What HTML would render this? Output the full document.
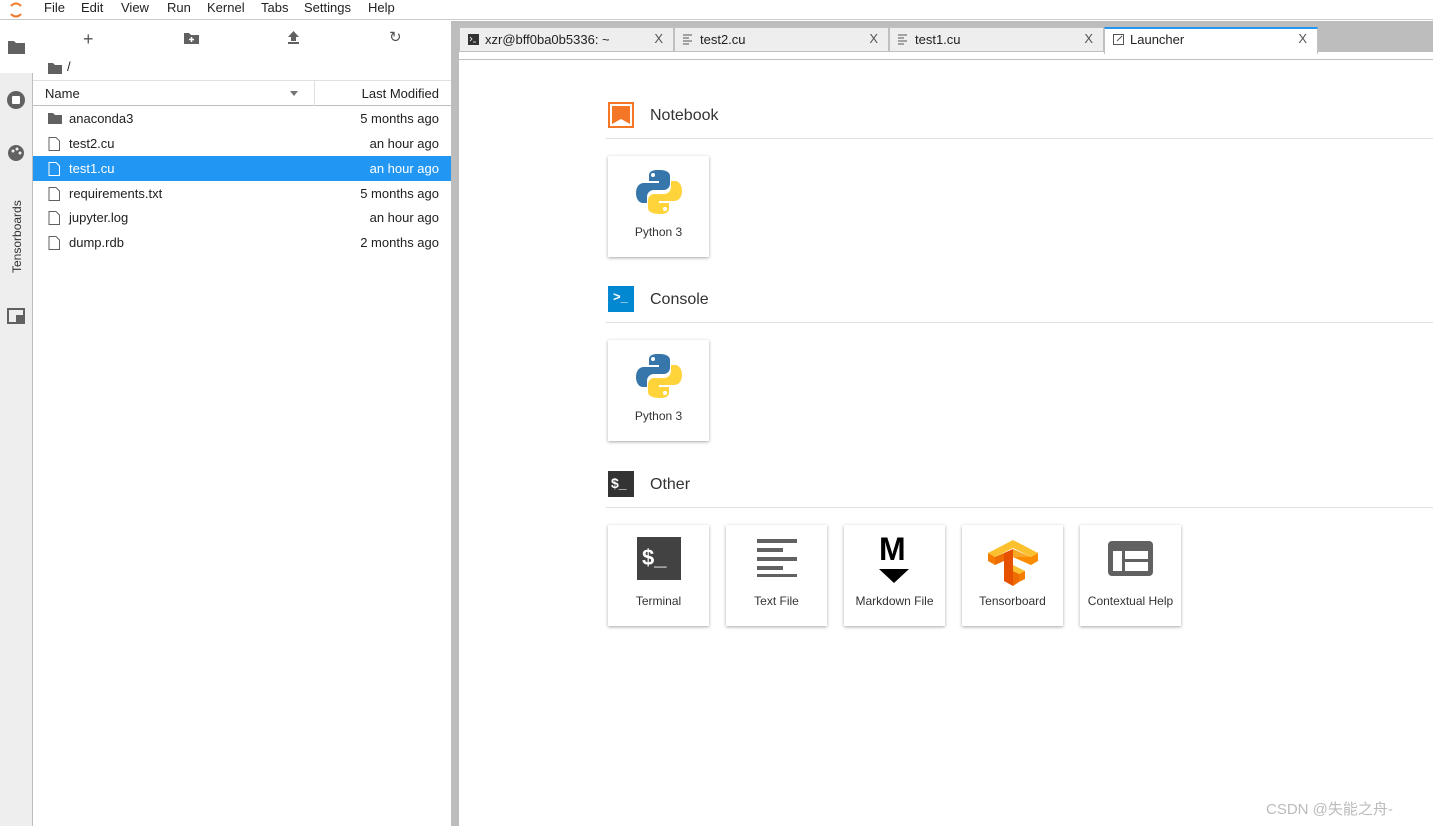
<!DOCTYPE html>
<html><head><meta charset="utf-8"><style>
*{box-sizing:border-box;margin:0;padding:0}
body{width:1433px;height:826px;overflow:hidden;font-family:"Liberation Sans",sans-serif;font-size:13px;color:#212121;background:#fff;position:relative}
.abs{position:absolute}
.menu{top:0;left:0;width:1433px;height:20px;border-bottom:1px solid #ccc;background:#fff}
.menu span{position:absolute;top:0;font-size:13px;color:#222}
.side{top:21px;left:0;width:33px;height:805px;background:#eeeeee;border-right:1px solid #bdbdbd}
.fb{top:21px;left:33px;width:418px;height:805px;background:#fff}
.split{top:21px;left:451px;width:8px;height:805px;background:#bdbdbd}
.row{position:absolute;left:33px;width:418px;height:25px;font-size:13px}
.row .n{position:absolute;left:36px;top:5px}
.row .d{position:absolute;right:12px;top:5px}
.row svg{position:absolute;left:15px;top:6px}
.tabbar{top:21px;left:459px;width:974px;height:31px;background:#bdbdbd}
.tab{position:absolute;top:27px;height:25px;background:#eeeeee;border:1px solid #c0c0c0;font-size:13px}
.tab span{position:absolute;left:25px;top:4px}
.tab b{position:absolute;right:10px;top:3px;font-weight:normal;color:#555}
.main{top:52px;left:459px;width:974px;height:774px;background:#fff}
.sec{position:absolute;left:606px;width:827px;border-bottom:1px solid #e0e0e0;height:47px}
.sec .t{position:absolute;left:44px;top:15px;font-size:16px;color:#333}
.card{position:absolute;width:101px;height:101px;background:#fff;box-shadow:0 1px 3px rgba(0,0,0,.35)}
.card .l{position:absolute;left:0;right:0;top:69px;text-align:center;font-size:12px;color:#333}
</style></head><body>
<div class="abs menu">
 <svg class="abs" style="left:8px;top:1px" width="16" height="18"><path d="M3 5 Q8 0 13 5" stroke="#f37726" stroke-width="2" fill="none"/><path d="M3 13 Q8 18 13 13" stroke="#f37726" stroke-width="2" fill="none"/></svg>
 <span style="left:44px">File</span><span style="left:81px">Edit</span><span style="left:121px">View</span><span style="left:167px">Run</span><span style="left:207px">Kernel</span><span style="left:261px">Tabs</span><span style="left:304px">Settings</span><span style="left:368px">Help</span>
</div>
<div class="abs side">
 <div class="abs" style="left:0;top:0;width:33px;height:52px;background:#fff"></div>
 <svg class="abs" style="left:8px;top:19px" width="17" height="14"><path d="M0 1h6l2 2h9v11H0z" fill="#616161"/></svg>
 <svg class="abs" style="left:7px;top:70px" width="18" height="18"><circle cx="9" cy="9" r="9" fill="#616161"/><rect x="5" y="5" width="8" height="8" rx="1" fill="#fff"/></svg>
 <svg class="abs" style="left:8px;top:124px" width="16" height="16"><circle cx="8" cy="8" r="8" fill="#616161"/><circle cx="5" cy="6" r="1.5" fill="#eee"/><circle cx="9" cy="4" r="1.5" fill="#eee"/><circle cx="12" cy="8" r="1.5" fill="#eee"/></svg>
 <div class="abs" style="left:10px;top:252px;transform:rotate(-90deg);transform-origin:0 0;font-size:12px;color:#333;white-space:nowrap">Tensorboards</div>
 <svg class="abs" style="left:7px;top:287px" width="18" height="16"><rect x="1" y="1" width="16" height="14" fill="none" stroke="#616161" stroke-width="2"/><rect x="9" y="7" width="8" height="8" fill="#616161"/></svg>
</div>
<div class="abs fb">
 <div class="abs" style="left:50px;top:8px;font-size:18px;color:#555">+</div>
 <svg class="abs" style="left:151px;top:11px" width="15" height="12"><path d="M0 1h5l2 2h8v9H0z" fill="#616161"/><path d="M7.5 5v5M5 7.5h5" stroke="#fff" stroke-width="1.5"/></svg>
 <svg class="abs" style="left:255px;top:10px" width="11" height="13"><path d="M5.5 0L0 6h3v4h5V6h3z" fill="#616161"/><rect y="11" width="11" height="2" fill="#616161"/></svg>
 <div class="abs" style="left:356px;top:7px;font-size:15px;color:#555">↻</div>
 <svg class="abs" style="left:15px;top:41px" width="14" height="12"><path d="M0 1h5l2 2h7v9H0z" fill="#616161"/></svg>
 <div class="abs" style="left:34px;top:38px">/</div>
 <div class="abs" style="left:0;top:59px;width:418px;height:26px;border-top:1px solid #e0e0e0;border-bottom:1px solid #bdbdbd">
  <span class="abs" style="left:12px;top:5px">Name</span>
  <span class="abs" style="left:257px;top:10px;border:4px solid transparent;border-top:5px solid #757575"></span>
  <span class="abs" style="left:281px;top:0;height:25px;border-left:1px solid #e0e0e0"></span>
  <span class="abs" style="right:12px;top:5px">Last Modified</span>
 </div>
</div>
<div class="row" style="top:106px"><svg width="14" height="12"><path d="M0 1h5l2 2h7v9H0z" fill="#616161"/></svg><span class="n">anaconda3</span><span class="d">5 months ago</span></div>
<div class="row" style="top:131px"><svg width="12" height="14"><path d="M1 .5h7l3.5 3.5v9.5H1z" fill="none" stroke="#616161"/></svg><span class="n">test2.cu</span><span class="d">an hour ago</span></div>
<div class="row" style="top:156px;background:#2196f3;color:#fff"><svg width="12" height="14"><path d="M1 .5h7l3.5 3.5v9.5H1z" fill="none" stroke="#fff"/></svg><span class="n">test1.cu</span><span class="d">an hour ago</span></div>
<div class="row" style="top:181px"><svg width="12" height="14"><path d="M1 .5h7l3.5 3.5v9.5H1z" fill="none" stroke="#616161"/></svg><span class="n">requirements.txt</span><span class="d">5 months ago</span></div>
<div class="row" style="top:205px"><svg width="12" height="14"><path d="M1 .5h7l3.5 3.5v9.5H1z" fill="none" stroke="#616161"/></svg><span class="n">jupyter.log</span><span class="d">an hour ago</span></div>
<div class="row" style="top:230px"><svg width="12" height="14"><path d="M1 .5h7l3.5 3.5v9.5H1z" fill="none" stroke="#616161"/></svg><span class="n">dump.rdb</span><span class="d">2 months ago</span></div>
<div class="abs split"></div>
<div class="abs main"></div>
<div class="abs tabbar"></div>
<div class="abs" style="left:459px;top:59px;width:974px;height:1px;background:#c0c0c0"></div>
<div class="tab" style="left:459px;width:215px"><svg class="abs" style="left:8px;top:6px" width="11" height="11"><rect width="11" height="11" fill="#333"/><path d="M2 3l2 2-2 2M5 8h3" stroke="#fff" stroke-width=".8" fill="none"/></svg><span>xzr@bff0ba0b5336: ~</span><b>X</b></div>
<div class="tab" style="left:674px;width:215px"><svg class="abs" style="left:8px;top:6px" width="10" height="11"><path d="M0 1h9M0 4h6M0 7h9M0 10h6" stroke="#555"/></svg><span>test2.cu</span><b>X</b></div>
<div class="tab" style="left:889px;width:215px"><svg class="abs" style="left:8px;top:6px" width="10" height="11"><path d="M0 1h9M0 4h6M0 7h9M0 10h6" stroke="#555"/></svg><span>test1.cu</span><b>X</b></div>
<div class="tab" style="left:1104px;width:214px;background:#fff;border-top:2px solid #2196f3;height:27px;border-bottom:none;z-index:2"><svg class="abs" style="left:8px;top:5px" width="11" height="11"><rect x=".5" y=".5" width="10" height="10" fill="none" stroke="#555"/><path d="M4 7l5-5" stroke="#555"/></svg><span style="top:3px">Launcher</span><b style="top:2px">X</b></div>
<div class="sec" style="top:92px"><div class="abs" style="left:2px;top:10px;width:26px;height:26px;background:#f37726"></div><div class="abs" style="left:4px;top:12px;width:22px;height:22px;background:#fff"></div><svg class="abs" style="left:6px;top:14px" width="18" height="18"><path d="M0 0h18v18l-9-5-9 5z" fill="#f37726"/></svg><div class="t">Notebook</div></div>
<div class="card" style="left:608px;top:156px"><svg class="abs" style="left:27px;top:12px" width="48" height="48" viewBox="0 0 48 48"><path d="M23 2c-9 0-9 4-9 6v5h10v2H9c-5 0-8 4-8 10s3 10 7 10h4v-6c0-4 3-7 7-7h10c3 0 6-3 6-6V8c0-3-3-6-10-6z" fill="#3776ab"/><path d="M25 46c9 0 9-4 9-6v-5H24v-2h15c5 0 8-4 8-10s-3-10-7-10h-4v6c0 4-3 7-7 7H19c-3 0-6 3-6 6v8c0 3 3 6 12 6z" fill="#ffd43b"/><circle cx="18" cy="7" r="2" fill="#fff"/><circle cx="30" cy="41" r="2" fill="#fff"/></svg><div class="l">Python 3</div></div>
<div class="sec" style="top:276px"><div class="abs" style="left:2px;top:10px;width:26px;height:26px;background:#0288d1"></div><div class="abs" style="left:7px;top:13px;color:#fff;font-size:13px;font-weight:bold">&gt;_</div><div class="t">Console</div></div>
<div class="card" style="left:608px;top:340px"><svg class="abs" style="left:27px;top:12px" width="48" height="48" viewBox="0 0 48 48"><path d="M23 2c-9 0-9 4-9 6v5h10v2H9c-5 0-8 4-8 10s3 10 7 10h4v-6c0-4 3-7 7-7h10c3 0 6-3 6-6V8c0-3-3-6-10-6z" fill="#3776ab"/><path d="M25 46c9 0 9-4 9-6v-5H24v-2h15c5 0 8-4 8-10s-3-10-7-10h-4v6c0 4-3 7-7 7H19c-3 0-6 3-6 6v8c0 3 3 6 12 6z" fill="#ffd43b"/><circle cx="18" cy="7" r="2" fill="#fff"/><circle cx="30" cy="41" r="2" fill="#fff"/></svg><div class="l">Python 3</div></div>
<div class="sec" style="top:461px"><div class="abs" style="left:2px;top:10px;width:26px;height:26px;background:#333"></div><div class="abs" style="left:5px;top:14px;color:#fff;font-size:14px;font-weight:bold">$_</div><div class="t">Other</div></div>
<div class="card" style="left:608px;top:525px"><div class="abs" style="left:29px;top:12px;width:44px;height:43px;background:#424242;color:#fff;font-size:22px;font-weight:bold;padding:8px 0 0 5px">$_</div><div class="l">Terminal</div></div>
<div class="card" style="left:726px;top:525px"><svg class="abs" style="left:31px;top:14px" width="40" height="38"><path d="M0 2h40M0 11h26M0 20h40M0 29h26M0 37h40" stroke="#616161" stroke-width="4"/></svg><div class="l">Text File</div></div>
<div class="card" style="left:844px;top:525px"><div class="abs" style="left:35px;top:6px;font-size:32px;font-weight:bold;color:#000">M</div><svg class="abs" style="left:35px;top:44px" width="30" height="14"><path d="M0 0h30L15 14z" fill="#000"/></svg><div class="l">Markdown File</div></div>
<div class="card" style="left:962px;top:525px"><svg class="abs" style="left:25px;top:7px" width="52" height="54">
<path d="M1 21L26 8l25 13-7 4-18-9-18 9z" fill="#fbc02d"/>
<path d="M1 21l7 4v8l-7-4z" fill="#f57c00"/>
<path d="M8 25l9-4v8l-9 4z" fill="#ef6c00"/>
<path d="M17 21l9-4 0 37-9-5z" fill="#e65100"/>
<path d="M26 17l18 8v8l-18-8z" fill="#f9a825"/>
<path d="M26 25l18 8 7-4v-8l-7 4z" fill="#fb8c00"/>
<path d="M26 33l12 6-6 3-6-3z" fill="#fbc02d"/>
<path d="M32 42l6-3v8l-6 3z" fill="#f57c00"/>
<path d="M26 39l6 3v8l-6 4z" fill="#ef6c00"/>
</svg><div class="l">Tensorboard</div></div>
<div class="card" style="left:1080px;top:525px"><svg class="abs" style="left:28px;top:16px" width="45" height="35"><rect width="45" height="35" rx="4" fill="#616161"/><rect x="5" y="10" width="9" height="20" fill="#fff"/><rect x="17" y="10" width="23" height="8" fill="#fff"/><rect x="17" y="21" width="23" height="9" fill="#fff"/></svg><div class="l">Contextual Help</div></div>
<div class="abs" style="left:1266px;top:798px;font-size:15px;color:#bbb;font-family:'Liberation Sans','Noto Sans CJK SC',sans-serif">CSDN @失能之舟-</div>
</body></html>
